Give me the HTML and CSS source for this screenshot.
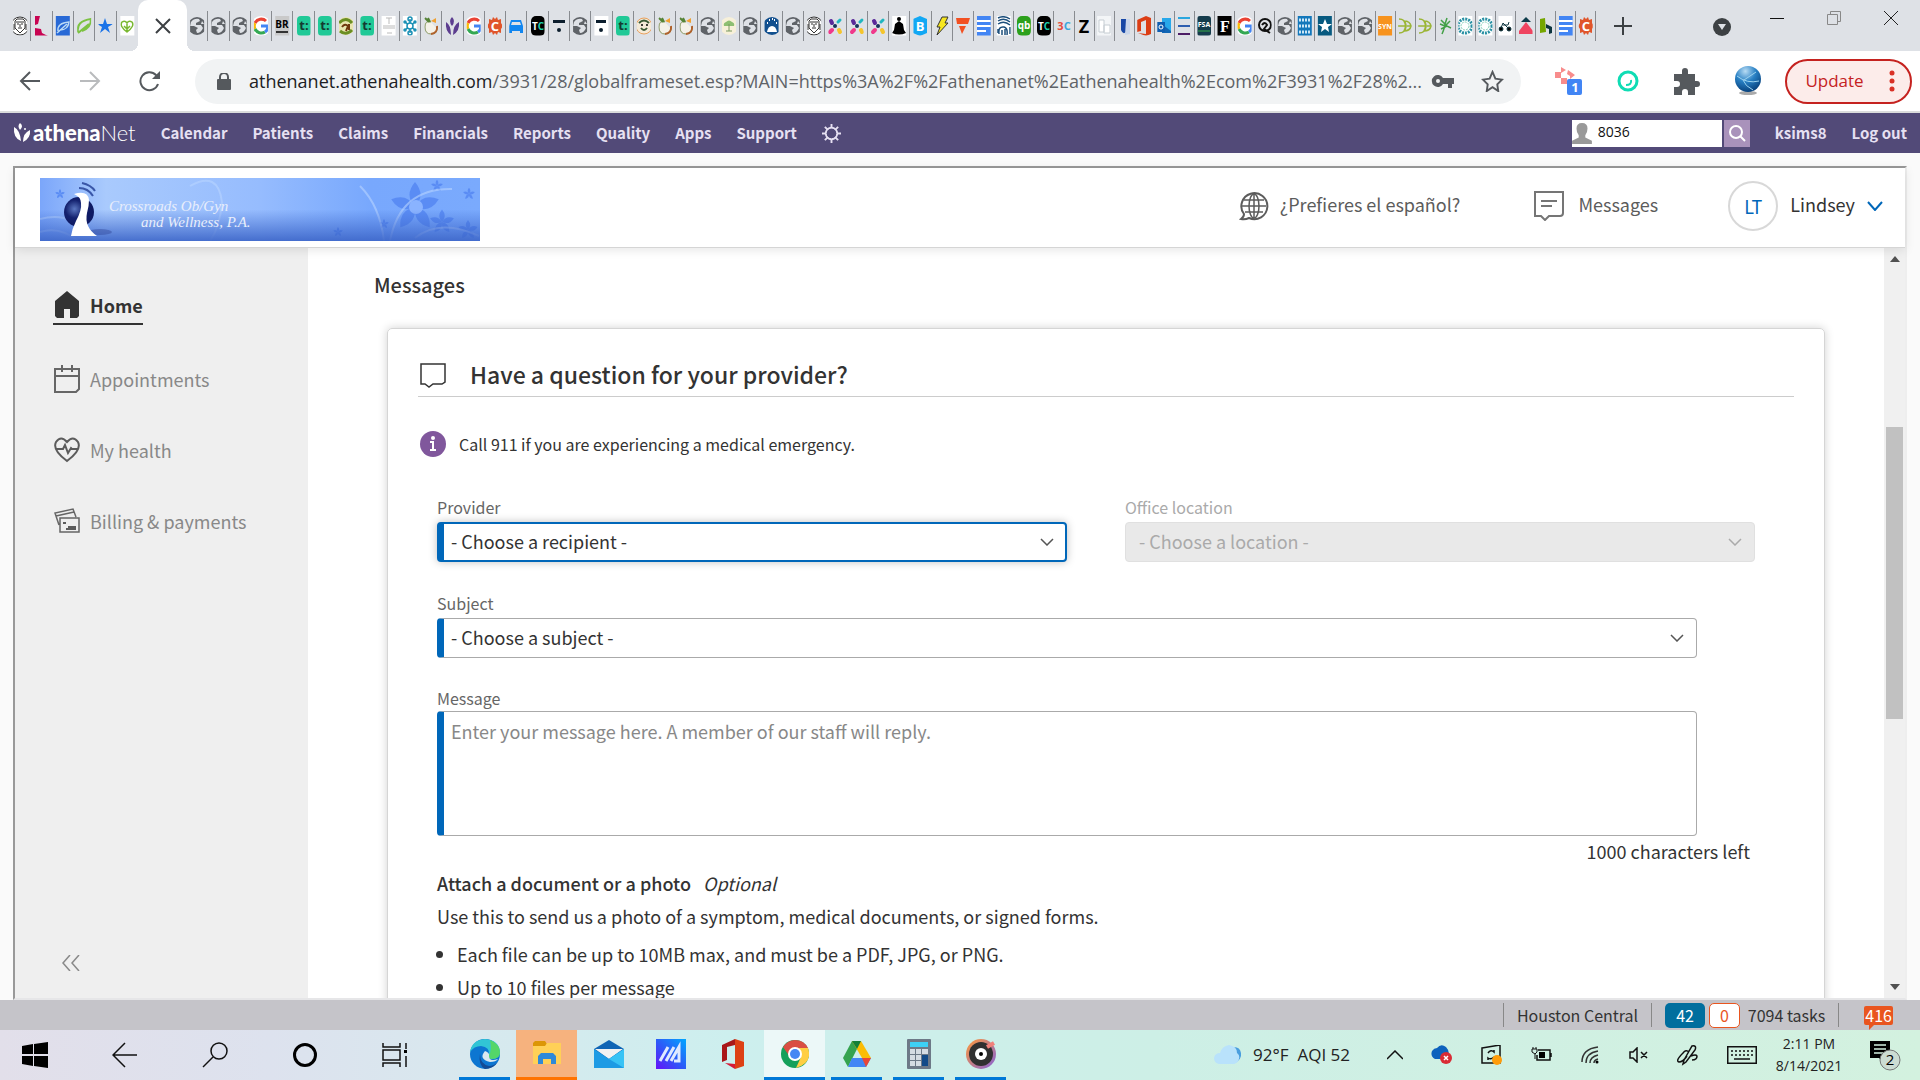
FILE: index.html
```html
<!DOCTYPE html>
<html lang="en">
<head>
  <meta charset="UTF-8">
  <meta name="viewport" content="width=device-width, initial-scale=1.0">
  <title>athenaNet - Messages</title>
  <link rel="stylesheet" href="styles.css">
</head>
<body>
  <!-- favicon shapes used by the tab strip -->
  <svg class="sprite" aria-hidden="true">
    <symbol id="f-globe" viewBox="0 0 20 20"><circle cx="10" cy="10" r="9" fill="#5f6368"/><path d="M4 6q3-4 8-3l1 2-4 2v2l5 0 2 3q-2 5-6 5l-1-3 2-2-4-2-4 0zM15 5l2 3-3 0z" fill="#dee1e6"/></symbol>
    <symbol id="f-seal" viewBox="0 0 20 20"><circle cx="10" cy="10" r="9" fill="#fff" stroke="#333"/><path d="M5 5l2-2h6l2 2v7l-5 5-5-5zM7 8h2m2 0h2m-5 4h4M10 8v3M4 8v6m12-6v6M6 6h8" fill="none" stroke="#333"/></symbol>
    <symbol id="f-k" viewBox="0 0 20 20"><path d="M4 0h5L7 8l-3 1zM4 20v-8l6 1 1 4 6 3z" fill="#c80452"/></symbol>
    <symbol id="f-swirlblue" viewBox="0 0 20 20"><path d="M0 0h20v20H0z" fill="#2869d6"/><path d="M5 15Q4 7 16 6q-1 8-9 8M4 17l10-9" fill="none" stroke="#b9d9f5" stroke-width="1.500"/></symbol>
    <symbol id="f-swirlgreen" viewBox="0 0 20 20"><path d="M4 16Q2 5 17 3q0 9-9 12M4 17l11-9" fill="none" stroke="#7cc242" stroke-width="2"/></symbol>
    <symbol id="f-star" viewBox="0 0 20 20"><path d="M10 2l2 6h6l-5 3 2 6-5-4-5 4 2-6-5-3h6z" fill="#1a73e8"/></symbol>
    <symbol id="f-heart" viewBox="0 0 20 20"><path d="M0 0h20v20H0z" fill="#fff"/><path d="M10 16Q2 10 5 6q3-2 5 1 2-3 5-1 3 4-5 10zm0 0V8m0 5l3-3m-3 3l-3-3" fill="none" stroke="#79b831" stroke-width="1.500"/></symbol>
    <symbol id="f-g" viewBox="0 0 20 20"><circle cx="10" cy="10" r="10" fill="#fff"/><g fill="none" stroke-width="3"><path d="M15 5A7 7 0 0 0 4 7" stroke="#ea4335"/><path d="M4 7a7 7 0 0 0 0 6" stroke="#fbbc05"/><path d="M4 13a7 7 0 0 0 10 3" stroke="#34a853"/><path d="M14 16q3-2 3-6h-7" stroke="#4285f4"/></g></symbol>
    <symbol id="f-br" viewBox="0 0 20 20"><path d="M0 0h20v20H0z" fill="#c9c9c9"/><text x="10" y="12" font-size="10">BR</text><path d="M4 15h12v2H4z" fill="#333"/></symbol>
    <symbol id="f-t" viewBox="0 0 20 20"><rect x="3" width="14" height="20" rx="4" fill="#20c997"/><text x="10" y="14" font-size="13" fill="#143a30">t:</text></symbol>
    <symbol id="f-olive" viewBox="0 0 20 20"><circle cx="10" cy="10" r="9" fill="#e9e6b0"/><path d="M3 7q7-7 13 0M4 15q6 5 12-1" stroke="#6b8e23" stroke-width="3" fill="none"/><path d="M6 11q3-4 6-1l-2 5M13 8v6" stroke="#70380e" stroke-width="2" fill="none"/></symbol>
    <symbol id="f-faint" viewBox="0 0 20 20"><path d="M0 0h20v20H0z" fill="#fff"/><path d="M7 2h6M10 2v6M4 10h12M4 12h12M8 17h5" stroke="#bbb" fill="none"/></symbol>
    <symbol id="f-flake" viewBox="0 0 20 20"><path d="M0 0h20v20H0z" fill="#fff"/><g fill="none" stroke="#188fb5" stroke-width="1.500"><path d="M10 3v14M5 6l10 8M15 6L5 14"/><circle cx="10" cy="10" r="3" fill="#fff"/><circle cx="10" cy="3" r="2"/><circle cx="10" cy="17" r="2"/><circle cx="5" cy="6" r="1"/><circle cx="15" cy="6" r="1"/><circle cx="5" cy="14" r="1"/><circle cx="15" cy="14" r="1"/></g></symbol>
    <symbol id="f-peach" viewBox="0 0 20 20"><path d="M10 6Q4 4 4 11t6 7 6-5" fill="#f4f1e8" stroke="#8a9a65"/><path d="M16 10q1 7-6 8" fill="none" stroke="#b0622c" stroke-width="2"/><path d="M4 2l4 4M7 2l2 4" stroke="#558336" stroke-width="2"/><path d="M10 5l5-3v5z" fill="#f0a030"/></symbol>
    <symbol id="f-athena" viewBox="0 0 20 20"><path d="M10 1q4 4 0 9-4-5 0-9zM4 6q5 3 5 13-6-4-5-13zM17 6q-6 3-6 13 7-4 6-13z" fill="#5c3d8f"/></symbol>
    <symbol id="f-c" viewBox="0 0 20 20"><path d="M8 1l2 2 2-2 1 3 3-1v4l2 3-2 3v4l-3-1-1 3-2-2-2 2-1-3-3 1v-4l-2-3 2-3V3l3 1z" fill="#e0552b"/><text x="10" y="15" font-size="13" class="white">C</text></symbol>
    <symbol id="f-car" viewBox="0 0 20 20"><path d="M5 4h10l2 6v7h-3v-2H6v2H3v-7zM6 6l-1 3h10l-1-3z" fill="#1186f0"/></symbol>
    <symbol id="f-tc" viewBox="0 0 20 20"><rect x="3" width="14" height="20" rx="5"/><text x="10" y="14" font-size="10" class="white">T<tspan fill="#1ed1b0">C</tspan></text></symbol>
    <symbol id="f-dash" viewBox="0 0 20 20"><path d="M4 4h12v3H4z" fill="#0c1e2e"/><circle cx="10" cy="14" r="2" fill="#0c1e2e"/></symbol>
    <symbol id="f-dashwhite" viewBox="0 0 20 20"><path d="M0 0h20v20H0z" fill="#fff"/><path d="M5 4h10v3H5z" fill="#0c1e2e"/><circle cx="10" cy="14" r="2" fill="#0c1e2e"/></symbol>
    <symbol id="f-face" viewBox="0 0 20 20"><circle cx="10" cy="10" r="8" fill="#f4ead8" stroke="#e9a15e"/><path d="M5 7q5-5 10 0M7 12q3 4 6 0" stroke="#3a5a35" stroke-width="2" fill="none"/><circle cx="8" cy="9" r="1"/><circle cx="13" cy="9" r="1"/></symbol>
    <symbol id="f-tree" viewBox="0 0 20 20"><circle cx="10" cy="10" r="9" fill="#f7f0d9"/><path d="M5 10q-1-3 2-4 3-3 6 0 3 1 2 4z" fill="#8ebf73"/><path d="M10 8v7M7 15h6" stroke="#7a9a60"/></symbol>
    <symbol id="f-badge" viewBox="0 0 20 20"><circle cx="10" cy="10" r="9" fill="#12508f"/><path d="M5 16q1-6 5-6t5 6z" fill="#fff"/><path d="M7 4h1m4 0h1M5 7h1m8 0h1m-5-4h1" stroke="#fff" stroke-width="2"/></symbol>
    <symbol id="f-x" viewBox="0 0 20 20"><g stroke-linecap="round"><path d="M6 5l1 2" stroke="#5a2a9a" stroke-width="4"/><path d="M15 4l-2 2" stroke="#21b6c0" stroke-width="3"/><path d="M7 14l-2 2" stroke="#f0398b" stroke-width="4"/><path d="M14 14l1 2" stroke="#f5c52c" stroke-width="4"/></g><circle cx="10" cy="10" r="2" fill="#16325c"/></symbol>
    <symbol id="f-yoga" viewBox="0 0 20 20"><path d="M0 0h20v20H0z" fill="#fff"/><circle cx="10" cy="3" r="2"/><path d="M10 5l4 3 1 6 2 3q-7 3-14 0l2-3 1-6z"/></symbol>
    <symbol id="f-b" viewBox="0 0 20 20"><path d="M10 0l7 3v14l-7 3-7-3V3z" fill="#12a8f4"/><text x="10" y="15" font-size="13" class="white">B</text></symbol>
    <symbol id="f-bolt" viewBox="0 0 20 20"><path d="M10 1h6l-3 6h3L5 19l3-8H5z" fill="#f7e620" stroke="#333"/></symbol>
    <symbol id="f-flag" viewBox="0 0 20 20"><path d="M3 2h14l-2 6H4zM6 10h7l-4 8z" fill="#f25022"/></symbol>
    <symbol id="f-docs" viewBox="0 0 20 20"><path d="M3 0h14v20H3z" fill="#4285f4"/><path d="M3 5h14M3 10h14M3 15h9" stroke="#fff" stroke-width="2"/></symbol>
    <symbol id="f-print" viewBox="0 0 20 20"><path d="M0 0h20v20H0z" fill="#fff"/><path d="M4 2q6-3 12 1M4 5q6-4 12 1M4 8q6-4 12 1M5 18q-1-8 5-7 4 1 3 8M8 19v-5M11 13v6M4 13v4m12-6v7" fill="none" stroke="#1d4f7c" stroke-width="1.500"/></symbol>
    <symbol id="f-qb" viewBox="0 0 20 20"><rect x="3" width="14" height="20" rx="5" fill="#2ca01c"/><text x="10" y="13" font-size="10" class="white">qb</text></symbol>
    <symbol id="f-3c" viewBox="0 0 20 20"><text x="10" y="14" font-size="11" fill="#e64b3c">3<tspan fill="#38a5dd">C</tspan></text></symbol>
    <symbol id="f-z" viewBox="0 0 20 20"><text x="10" y="17" font-size="18">Z</text></symbol>
    <symbol id="f-sheet" viewBox="0 0 20 20"><path d="M3 0h14v20H3z" fill="#f3f5f7"/><path d="M5 4h5v12H5zM10 9h6v8h-6z" fill="#fff" stroke="#c6cdd3"/></symbol>
    <symbol id="f-tie" viewBox="0 0 20 20"><path d="M7 3h5v13q-3 3-5-2z" fill="#1747a6"/><path d="M12 3h4v15l-5 1z" fill="#c8d5ea"/></symbol>
    <symbol id="f-office" viewBox="0 0 20 20"><path d="M12 0l5 2v16l-5 2-8-3 8 1V4L7 6v9l-4 1V4z" fill="#dc3e15"/></symbol>
    <symbol id="f-outlook" viewBox="0 0 20 20"><path d="M8 2h9v15H8z" fill="#28a8ea"/><path d="M9 9l8 6v2H8z" fill="#1066b5"/><path d="M3 6h8v10H3z" fill="#0f5db0"/><circle cx="7" cy="11" r="2" fill="none" stroke="#fff"/></symbol>
    <symbol id="f-lines" viewBox="0 0 20 20"><path d="M4 2h12" stroke="#2aa7df" stroke-width="2"/><path d="M4 10h12" stroke="#2e5fb0" stroke-width="2"/><path d="M4 18h12" stroke="#4d1d66" stroke-width="2"/></symbol>
    <symbol id="f-fsa" viewBox="0 0 20 20"><rect x="3" width="14" height="20" rx="3" fill="#153c4c"/><text x="10" y="11" font-size="7" class="white">FSA</text><path d="M4 15h12" stroke="#35a649"/></symbol>
    <symbol id="f-f" viewBox="0 0 20 20"><path d="M0 0h20v20H0z"/><text x="10" y="16" font-size="16" class="white serif">F</text></symbol>
    <symbol id="f-q" viewBox="0 0 20 20"><circle cx="10" cy="9" r="6" fill="none" stroke="#111" stroke-width="2"/><path d="M7 9q3-4 5 0l-3 4 6 4" fill="none" stroke="#111" stroke-width="2"/></symbol>
    <symbol id="f-dean" viewBox="0 0 20 20"><path d="M0 0h20v20H0z" fill="#1277bb"/><path d="M4 4h12M4 10h12M4 16h12" stroke="#cbe6f6" stroke-width="3" stroke-dasharray="2 1"/></symbol>
    <symbol id="f-starteal" viewBox="0 0 20 20"><path d="M0 0h20v20H0z" fill="#075a80"/><path d="M10 3l2 5h5l-4 3 1 5-4-3-4 3 1-5-4-3h5z" fill="#fff"/></symbol>
    <symbol id="f-syn" viewBox="0 0 20 20"><path d="M0 0h20v20H0z" fill="#f7931e"/><text x="10" y="13" font-size="7" class="white">SYN</text></symbol>
    <symbol id="f-leafarrow" viewBox="0 0 20 20"><path d="M4 3q6 0 7 6M4 17q6 0 7-6M3 10h12M9 5q6 0 7 5-1 5-7 5 3-5 0-10z" fill="none" stroke="#9bb536" stroke-width="1.500"/></symbol>
    <symbol id="f-plant" viewBox="0 0 20 20"><path d="M7 18q3-7 3-10M5 8l5 2 5-5M6 4l4 4 2-6M6 13l6-3 4 2" fill="none" stroke="#43a047" stroke-width="1.500"/></symbol>
    <symbol id="f-rings" viewBox="0 0 20 20"><path d="M0 0h20v20H0z" fill="#fff"/><circle cx="10" cy="10" r="7" fill="none" stroke="#2a91a4" stroke-width="3" stroke-dasharray="2 1"/><circle cx="10" cy="10" r="4" fill="none" stroke="#82ccb5" stroke-dasharray="2 1"/></symbol>
    <symbol id="f-bike" viewBox="0 0 20 20"><path d="M0 0h20v20H0z" fill="#fff"/><path d="M6 12l2-5 5 5M8 9h5l1-3" fill="none" stroke="#0e3640"/><circle cx="6" cy="13" r="2" stroke="#0e3640"/><circle cx="14" cy="13" r="2" stroke="#0e3640"/></symbol>
    <symbol id="f-house" viewBox="0 0 20 20"><path d="M10 1l5 5H5z" fill="#0e3d4b"/><path d="M10 6l7 9v3H3v-3z" fill="#ef4460"/></symbol>
    <symbol id="f-n" viewBox="0 0 20 20"><path d="M4 3l5-1 1 14-6 1z" fill="#75a600"/><path d="M10 8l6 3v6l-3 1v-5l-3-1z" fill="#0d353f"/></symbol>
  </svg>

  <header class="browser">
    <div class="tab-strip">
      <div class="tabs tabs-first">
        <a href="#" class="tab" aria-label="Tab"><svg><use href="#f-seal"/></svg></a>
        <a href="#" class="tab" aria-label="Tab"><svg><use href="#f-k"/></svg></a>
        <a href="#" class="tab" aria-label="Tab"><svg><use href="#f-swirlblue"/></svg></a>
        <a href="#" class="tab" aria-label="Tab"><svg><use href="#f-swirlgreen"/></svg></a>
        <a href="#" class="tab" aria-label="Tab"><svg><use href="#f-star"/></svg></a>
        <a href="#" class="tab" aria-label="Tab"><svg><use href="#f-heart"/></svg></a>
      </div>
      <button type="button" class="tab-active" aria-label="Close tab">
        <svg width="16" height="16" viewBox="0 0 16 16"><path d="M1 1l14 14M15 1L1 15" stroke="#3c4043" stroke-width="2"/></svg>
      </button>
      <div class="tabs tabs-middle">
        <a href="#" class="tab" aria-label="Tab"><svg><use href="#f-globe"/></svg></a>
        <a href="#" class="tab" aria-label="Tab"><svg><use href="#f-globe"/></svg></a>
        <a href="#" class="tab" aria-label="Tab"><svg><use href="#f-globe"/></svg></a>
        <a href="#" class="tab" aria-label="Tab"><svg><use href="#f-g"/></svg></a>
        <a href="#" class="tab" aria-label="Tab"><svg><use href="#f-br"/></svg></a>
        <a href="#" class="tab" aria-label="Tab"><svg><use href="#f-t"/></svg></a>
        <a href="#" class="tab" aria-label="Tab"><svg><use href="#f-t"/></svg></a>
        <a href="#" class="tab" aria-label="Tab"><svg><use href="#f-olive"/></svg></a>
        <a href="#" class="tab" aria-label="Tab"><svg><use href="#f-t"/></svg></a>
        <a href="#" class="tab" aria-label="Tab"><svg><use href="#f-faint"/></svg></a>
        <a href="#" class="tab" aria-label="Tab"><svg><use href="#f-flake"/></svg></a>
        <a href="#" class="tab" aria-label="Tab"><svg><use href="#f-peach"/></svg></a>
        <a href="#" class="tab" aria-label="Tab"><svg><use href="#f-athena"/></svg></a>
        <a href="#" class="tab" aria-label="Tab"><svg><use href="#f-g"/></svg></a>
        <a href="#" class="tab" aria-label="Tab"><svg><use href="#f-c"/></svg></a>
        <a href="#" class="tab" aria-label="Tab"><svg><use href="#f-car"/></svg></a>
        <a href="#" class="tab" aria-label="Tab"><svg><use href="#f-tc"/></svg></a>
        <a href="#" class="tab" aria-label="Tab"><svg><use href="#f-dash"/></svg></a>
        <a href="#" class="tab" aria-label="Tab"><svg><use href="#f-globe"/></svg></a>
        <a href="#" class="tab" aria-label="Tab"><svg><use href="#f-dashwhite"/></svg></a>
        <a href="#" class="tab" aria-label="Tab"><svg><use href="#f-t"/></svg></a>
        <a href="#" class="tab" aria-label="Tab"><svg><use href="#f-face"/></svg></a>
        <a href="#" class="tab" aria-label="Tab"><svg><use href="#f-peach"/></svg></a>
        <a href="#" class="tab" aria-label="Tab"><svg><use href="#f-peach"/></svg></a>
        <a href="#" class="tab" aria-label="Tab"><svg><use href="#f-globe"/></svg></a>
        <a href="#" class="tab" aria-label="Tab"><svg><use href="#f-tree"/></svg></a>
        <a href="#" class="tab" aria-label="Tab"><svg><use href="#f-globe"/></svg></a>
        <a href="#" class="tab" aria-label="Tab"><svg><use href="#f-badge"/></svg></a>
        <a href="#" class="tab" aria-label="Tab"><svg><use href="#f-globe"/></svg></a>
        <a href="#" class="tab" aria-label="Tab"><svg><use href="#f-seal"/></svg></a>
        <a href="#" class="tab" aria-label="Tab"><svg><use href="#f-x"/></svg></a>
        <a href="#" class="tab" aria-label="Tab"><svg><use href="#f-x"/></svg></a>
        <a href="#" class="tab" aria-label="Tab"><svg><use href="#f-x"/></svg></a>
        <a href="#" class="tab" aria-label="Tab"><svg><use href="#f-yoga"/></svg></a>
        <a href="#" class="tab" aria-label="Tab"><svg><use href="#f-b"/></svg></a>
        <a href="#" class="tab" aria-label="Tab"><svg><use href="#f-bolt"/></svg></a>
        <a href="#" class="tab" aria-label="Tab"><svg><use href="#f-flag"/></svg></a>
      </div>
      <div class="tabs tabs-last">
        <a href="#" class="tab" aria-label="Tab"><svg><use href="#f-docs"/></svg></a>
        <a href="#" class="tab" aria-label="Tab"><svg><use href="#f-print"/></svg></a>
        <a href="#" class="tab" aria-label="Tab"><svg><use href="#f-qb"/></svg></a>
        <a href="#" class="tab" aria-label="Tab"><svg><use href="#f-tc"/></svg></a>
        <a href="#" class="tab" aria-label="Tab"><svg><use href="#f-3c"/></svg></a>
        <a href="#" class="tab" aria-label="Tab"><svg><use href="#f-z"/></svg></a>
        <a href="#" class="tab" aria-label="Tab"><svg><use href="#f-sheet"/></svg></a>
        <a href="#" class="tab" aria-label="Tab"><svg><use href="#f-tie"/></svg></a>
        <a href="#" class="tab" aria-label="Tab"><svg><use href="#f-office"/></svg></a>
        <a href="#" class="tab" aria-label="Tab"><svg><use href="#f-outlook"/></svg></a>
        <a href="#" class="tab" aria-label="Tab"><svg><use href="#f-lines"/></svg></a>
        <a href="#" class="tab" aria-label="Tab"><svg><use href="#f-fsa"/></svg></a>
        <a href="#" class="tab" aria-label="Tab"><svg><use href="#f-f"/></svg></a>
        <a href="#" class="tab" aria-label="Tab"><svg><use href="#f-g"/></svg></a>
        <a href="#" class="tab" aria-label="Tab"><svg><use href="#f-q"/></svg></a>
        <a href="#" class="tab" aria-label="Tab"><svg><use href="#f-globe"/></svg></a>
        <a href="#" class="tab" aria-label="Tab"><svg><use href="#f-dean"/></svg></a>
        <a href="#" class="tab" aria-label="Tab"><svg><use href="#f-starteal"/></svg></a>
        <a href="#" class="tab" aria-label="Tab"><svg><use href="#f-globe"/></svg></a>
        <a href="#" class="tab" aria-label="Tab"><svg><use href="#f-globe"/></svg></a>
        <a href="#" class="tab" aria-label="Tab"><svg><use href="#f-syn"/></svg></a>
        <a href="#" class="tab" aria-label="Tab"><svg><use href="#f-leafarrow"/></svg></a>
        <a href="#" class="tab" aria-label="Tab"><svg><use href="#f-leafarrow"/></svg></a>
        <a href="#" class="tab" aria-label="Tab"><svg><use href="#f-plant"/></svg></a>
        <a href="#" class="tab" aria-label="Tab"><svg><use href="#f-rings"/></svg></a>
        <a href="#" class="tab" aria-label="Tab"><svg><use href="#f-rings"/></svg></a>
        <a href="#" class="tab" aria-label="Tab"><svg><use href="#f-bike"/></svg></a>
        <a href="#" class="tab" aria-label="Tab"><svg><use href="#f-house"/></svg></a>
        <a href="#" class="tab" aria-label="Tab"><svg><use href="#f-n"/></svg></a>
        <a href="#" class="tab" aria-label="Tab"><svg><use href="#f-docs"/></svg></a>
        <a href="#" class="tab" aria-label="Tab"><svg><use href="#f-c"/></svg></a>
      </div>
      <button type="button" class="new-tab" aria-label="New tab"><svg width="18" height="18" viewBox="0 0 18 18"><path d="M9 0v18M0 9h18" stroke="#3c4043" stroke-width="2"/></svg></button>
      <div class="window-buttons">
        <button type="button" class="tab-search" aria-label="Search tabs"><svg width="18" height="18" viewBox="0 0 18 18"><circle cx="9" cy="9" r="9" fill="#3c4043"/><path d="M5 6h8l-4 6z" fill="#dee1e6"/></svg></button>
        <button type="button" aria-label="Minimize"><svg width="14" height="14" viewBox="0 0 14 14"><path d="M0 7.500h14" stroke="#111"/></svg></button>
        <button type="button" aria-label="Restore"><svg width="14" height="14" viewBox="0 0 14 14"><path d="M.5 3.500h10v10H.5zM3.500 3V.5h10v10H11" fill="none" stroke="#888"/></svg></button>
        <button type="button" aria-label="Close"><svg width="14" height="14" viewBox="0 0 14 14"><path d="M0 0l14 14M14 0L0 14" stroke="#222"/></svg></button>
      </div>
    </div>

    <div class="toolbar">
      <div class="toolbar-nav">
        <button type="button" aria-label="Back"><svg width="22" height="22" viewBox="0 0 22 22"><path d="M21 11H2m9-9l-9 9 9 9" fill="none" stroke="#55595d" stroke-width="2"/></svg></button>
        <button type="button" aria-label="Forward"><svg width="22" height="22" viewBox="0 0 22 22"><path d="M1 11h19m-9-9l9 9-9 9" fill="none" stroke="#b9bbbd" stroke-width="2"/></svg></button>
        <button type="button" aria-label="Reload"><svg width="22" height="22" viewBox="0 0 22 22"><path d="M19 14a9 9 0 1 1-2-9l2 2" fill="none" stroke="#55595d" stroke-width="2"/><path d="M21 1v8h-8z" fill="#55595d"/></svg></button>
      </div>
      <div class="address">
        <svg width="14" height="17" viewBox="0 0 14 17"><path d="M3 7V4a4 4 0 0 1 8 0v3" fill="none" stroke="#55595d" stroke-width="2"/><rect y="6" width="14" height="11" rx="1" fill="#55595d"/></svg>
        <div class="url" role="textbox" aria-label="Address"><span>athenanet.athenahealth.com</span>/3931/28/globalframeset.esp?MAIN=https%3A%2F%2Fathenanet%2Eathenahealth%2Ecom%2F3931%2F28%2...</div>
        <svg width="23" height="14" viewBox="0 0 23 14"><path d="M12 4a6 6 0 1 0 0 6h5v4h4v-4h2V4zM7 5a2 2 0 1 1 0 4 2 2 0 0 1 0-4z" fill="#55595d"/></svg>
        <svg width="23" height="22" viewBox="0 0 24 23"><path d="M12 2l3 7 7 1-5 5 1 7-6-4-6 4 1-7-5-5 7-1z" fill="none" stroke="#55595d" stroke-width="2"/></svg>
      </div>
      <div class="extensions">
        <svg width="28" height="28" viewBox="0 0 28 28"><path d="M0 5h6v6H0zm6 6h6v6H6zM6 0l5 3-5 3zM13 3l7 5-5 4v-3l-3-2z" fill="#f88c8c"/><rect x="12" y="12" width="15" height="16" rx="2" fill="#4285f4"/><text x="20" y="25" font-size="13" class="white">1</text></svg>
        <svg width="22" height="22" viewBox="0 0 22 22"><circle cx="11" cy="11" r="9" fill="none" stroke="#0fdcb4" stroke-width="3"/><path d="M14 10q1 5-5 5" fill="none" stroke="#0fdcb4" stroke-width="2"/></svg>
        <svg width="27" height="27" viewBox="0 0 27 27"><path d="M1 6h8V3a3 3 0 0 1 6 0v3h7v7h2a3 3 0 0 1 0 6h-2v8h-7v-3a3 3 0 0 0-6 0v3H1v-8h3a3 3 0 0 0 0-6H1z" fill="#55595d"/></svg>
        <svg width="28" height="30" viewBox="0 0 28 30"><defs><radialGradient id="ball" cx=".4" cy=".2" r=".8"><stop offset="0" stop-color="#b8dcf4"/><stop offset=".5" stop-color="#2880c4"/><stop offset="1" stop-color="#08427d"/></radialGradient></defs><ellipse cx="14" cy="27" rx="9" ry="2" fill="#aaa"/><circle cx="14" cy="13" r="13" fill="url(#ball)"/><path d="M3 10q10 8 22 5M9 14q2 6 10 10M10 14l12-8" fill="none" stroke="#9cd3ef"/></svg>
      </div>
      <button type="button" class="update">Update
        <svg width="6" height="22" viewBox="0 0 6 22"><circle cx="3" cy="3" r="2.500"/><circle cx="3" cy="11" r="2.500"/><circle cx="3" cy="19" r="2.500"/></svg>
      </button>
    </div>
  </header>

  <nav class="athena-nav">
    <a href="#" class="athena-logo">
      <svg width="18" height="20" viewBox="0 0 18 20"><path d="M7 0q4 3 0 7-3-4 0-7zM1 4q6 3 7 14-8-3-7-14zM17 7q1 8-7 12 0-9 7-12z" fill="#fff"/><circle cx="12" cy="6" r="1" fill="#fff"/></svg>
      <span><b>athena</b>Net</span>
    </a>
    <a href="#">Calendar</a>
    <a href="#">Patients</a>
    <a href="#">Claims</a>
    <a href="#">Financials</a>
    <a href="#">Reports</a>
    <a href="#">Quality</a>
    <a href="#">Apps</a>
    <a href="#">Support</a>
    <a href="#" class="gear" aria-label="Settings"><svg width="19" height="19" viewBox="0 0 20 20"><circle cx="10" cy="10" r="6" fill="none" stroke="#e6e0f2" stroke-width="2"/><path d="M10 4V0m0 16v4M4 10H0m16 0h4M6 6L3 3m11 3l3-3M6 14l-3 3m11-3l3 3" stroke="#e6e0f2" stroke-width="2"/><circle cx="10" cy="10" r="5" fill="#524a78"/></svg></a>
    <form class="patient-search">
      <svg width="20" height="22" viewBox="0 0 18 20"><path d="M9 1q5 0 5 5 0 4-2 6v2l6 3v3H0v-3l6-3v-2q-2-2-2-6 0-5 5-5z" fill="#999"/></svg>
      <input type="text" value="8036" aria-label="Patient search">
      <button type="submit" aria-label="Search"><svg width="18" height="18" viewBox="0 0 18 18"><circle cx="8" cy="8" r="6" fill="none" stroke="#fff" stroke-width="2"/><path d="M12 12l5 5" stroke="#fff" stroke-width="2"/></svg></button>
    </form>
    <a href="#">ksims8</a>
    <a href="#">Log out</a>
  </nav>

  <div class="frame">
    <header class="portal-header">
      <a href="#" class="practice-logo" aria-label="Crossroads Ob/Gyn and Wellness">
        <svg viewBox="0 0 440 63">
          <defs>
            <linearGradient id="sky"><stop offset="0" stop-color="#7ba6fa"/><stop offset=".15" stop-color="#a9cafd"/><stop offset=".5" stop-color="#96bcfe"/><stop offset=".75" stop-color="#78a8fd"/><stop offset="1" stop-color="#7aaafd"/></linearGradient>
            <linearGradient id="dusk" x2="0" y2="1"><stop offset=".5" stop-color="#3d68cd" stop-opacity="0"/><stop offset="1" stop-color="#3c65c8" stop-opacity=".9"/></linearGradient>
            <radialGradient id="orb" cx=".35" cy=".4"><stop offset="0" stop-color="#5a76c0"/><stop offset=".6" stop-color="#14226f"/><stop offset="1" stop-color="#0e1a63"/></radialGradient>
            <path id="petal" d="M0 0Q-11-12 0-25 11-12 0 0z"/>
            <g id="flower"><use href="#petal"/><use href="#petal" transform="rotate(72)"/><use href="#petal" transform="rotate(144)"/><use href="#petal" transform="rotate(216)"/><use href="#petal" transform="rotate(288)"/></g>
          </defs>
          <path d="M0 0h440v63H0z" fill="url(#sky)"/>
          <g fill="#5a8cf4">
            <use href="#flower" transform="translate(375 29)"/>
            <use href="#flower" transform="translate(402 44) scale(.5)"/>
            <use href="#flower" transform="translate(428 52) scale(.4)"/>
            <use href="#flower" transform="translate(429 16) scale(.25)"/>
            <use href="#flower" transform="translate(397 8) scale(.25)"/>
            <use href="#flower" transform="translate(344 46) scale(.2)"/>
            <use href="#flower" transform="translate(298 54) scale(.2)"/>
            <use href="#flower" transform="translate(20 16) scale(.2)"/>
          </g>
          <g fill="none" stroke="#b8d3ff" stroke-opacity=".6" stroke-width="2"><path d="M320 8q20 20 24 55M350 63q10-53 62-52M375 60q25-20 64-2M0 41q30-8 44 15M0 54q20-6 38 9M150 8q28-16 32 16-2 25-12 39"/></g>
          <circle cx="376" cy="29" r="7" fill="#8ab3ff"/>
          <path d="M0 0h440v63H0z" fill="url(#dusk)"/>
          <ellipse cx="60" cy="54" rx="12" ry="3" fill="#2a3f90" opacity=".4"/>
          <circle cx="39" cy="34" r="15" fill="url(#orb)"/>
          <path d="M34 16q14-4 15 6 0 6-2 13-3 14 10 23H31q1-7 5-15 6-11 5-18 0-6-7-9z" fill="#fff"/>
          <path d="M42 5q9 2 13 8M39 10q9 0 14 8" fill="none" stroke="#3956a8" stroke-width="2"/>
          <text x="69" y="33" class="logo-text">Crossroads Ob/Gyn</text>
          <text x="101" y="49" class="logo-text">and Wellness, P.A.</text>
        </svg>
      </a>
      <a href="#" class="header-link">
        <svg width="30" height="30" viewBox="0 0 30 30"><g fill="none" stroke="#5c5c5c" stroke-width="2"><path d="M5 23a13 13 0 1 1 5 4q-4 2-8 1 3-2 3-5z"/><ellipse cx="15" cy="15" rx="5" ry="12" stroke-width="1.500"/><path d="M15 3v24M5 9h20M3 15h24M6 21h18" stroke-width="1.500"/></g></svg>
        <span>¿Prefieres el español?</span>
      </a>
      <a href="#" class="header-link messages-link">
        <svg width="30" height="30" viewBox="0 0 30 30"><g fill="none" stroke="#757575" stroke-width="2"><path d="M1 1h28v21q0 3-3 3H15l-4 4-4-4H1z"/><path d="M7 10h16M7 15h11"/></g></svg>
        <span>Messages</span>
      </a>
      <button type="button" class="user-menu">
        <span class="avatar">LT</span>
        <span class="user-name">Lindsey</span>
        <svg width="16" height="10" viewBox="0 0 16 10"><path d="M1 1l7 8 7-8" fill="none" stroke="#0067b9" stroke-width="2"/></svg>
      </button>
    </header>

    <div class="portal-body">
      <aside class="sidebar">
        <nav>
          <a href="#" class="side-link active"><svg width="26" height="28" viewBox="0 0 26 28"><path d="M1 10L13 0l12 10v15l-2 2h-7v-9h-6v9H3l-2-2z" fill="#333"/></svg><span>Home</span></a>
          <a href="#" class="side-link"><svg width="26" height="28" viewBox="0 0 26 28"><path d="M1 4h24v20l-3 3H1zM1 11h24M8 0v7M18 0v7" fill="none" stroke="#666" stroke-width="2"/></svg><span>Appointments</span></a>
          <a href="#" class="side-link"><svg width="26" height="28" viewBox="0 0 26 28"><path d="M13 25Q-2 14 2 6q5-7 11 0 6-7 11 0 4 8-11 19zM2 13h7l2-4 3 8 3-5 1 1h6" fill="none" stroke="#5c5c5c" stroke-width="2"/></svg><span>My health</span></a>
          <a href="#" class="side-link"><svg width="26" height="28" viewBox="0 0 26 28"><path d="M6 11h19v14H6zM5 18L1 6l18-4 3 8M2 9l18-4" fill="none" stroke="#666" stroke-width="1.500"/><path d="M9 16h3M14 20h8M12 22h10" stroke="#5c5c5c" stroke-width="2"/></svg><span>Billing &amp; payments</span></a>
        </nav>
        <button type="button" class="collapse" aria-label="Collapse"><svg width="18" height="16" viewBox="0 0 18 16"><path d="M8 0L1 8l7 8M17 0l-7 8 7 8" fill="none" stroke="#888" stroke-width="1.500"/></svg></button>
      </aside>

      <main class="content">
        <h1>Messages</h1>
        <section class="card">
          <div class="card-title">
            <svg width="26" height="26" viewBox="0 0 26 26"><path d="M1 2h24v18l-3 2H13l-4 3-4-3H1z" fill="none" stroke="#333" stroke-width="1.500"/></svg>
            <h2>Have a question for your provider?</h2>
          </div>
          <p class="notice">
            <svg width="26" height="26" viewBox="0 0 26 26"><circle cx="13" cy="13" r="13" fill="#80579c"/><circle cx="13" cy="7" r="2" fill="#fff"/><path d="M10 10h4v8h2v2h-6v-2h2v-6h-2z" fill="#fff"/></svg>
            Call 911 if you are experiencing a medical emergency.
          </p>

          <form class="message-form">
            <div class="row">
              <div class="field">
                <label for="provider">Provider</label>
                <div class="select required focused">
                  <select id="provider"><option>- Choose a recipient -</option></select>
                  <svg width="14" height="8" viewBox="0 0 14 8"><path d="M1 1l6 6 6-6" fill="none" stroke="#555" stroke-width="1.500"/></svg>
                </div>
              </div>
              <div class="field disabled">
                <label for="location">Office location</label>
                <div class="select">
                  <select id="location" disabled><option>- Choose a location -</option></select>
                  <svg width="14" height="8" viewBox="0 0 14 8"><path d="M1 1l6 6 6-6" fill="none" stroke="#aaa" stroke-width="1.500"/></svg>
                </div>
              </div>
            </div>
            <div class="field wide">
              <label for="subject">Subject</label>
              <div class="select required">
                <select id="subject"><option>- Choose a subject -</option></select>
                <svg width="14" height="8" viewBox="0 0 14 8"><path d="M1 1l6 6 6-6" fill="none" stroke="#555" stroke-width="1.500"/></svg>
              </div>
            </div>
            <div class="field wide message">
              <label for="message">Message</label>
              <textarea id="message" placeholder="Enter your message here. A member of our staff will reply."></textarea>
            </div>
            <p class="counter">1000 characters left</p>
            <p class="attach-title"><strong>Attach a document or a photo</strong> <em>Optional</em></p>
            <p class="attach-text">Use this to send us a photo of a symptom, medical documents, or signed forms.</p>
            <ul>
              <li>Each file can be up to 10MB max, and must be a PDF, JPG, or PNG.</li>
              <li>Up to 10 files per message</li>
            </ul>
          </form>
        </section>
      </main>

      <div class="scrollbar">
        <svg width="10" height="6" viewBox="0 0 10 6"><path d="M0 6l5-6 5 6z" fill="#505050"/></svg>
        <div class="track"><div class="thumb"></div></div>
        <svg width="10" height="6" viewBox="0 0 10 6"><path d="M0 0l5 6 5-6z" fill="#505050"/></svg>
      </div>
    </div>
  </div>

  <footer class="status-bar">
    <span class="status-item">Houston Central</span>
    <span class="status-item tasks"><b class="pill blue">42</b><b class="pill orange">0</b>7094 tasks</span>
    <span class="status-item"><span class="alert-count">416</span></span>
  </footer>

  <footer class="taskbar">
    <div class="system-buttons">
      <button type="button" aria-label="Start"><svg width="26" height="26" viewBox="0 0 26 26"><path d="M0 4l11-2v10H0zM12 2l14-2v12H12zM0 14h11v10L0 22zM12 14h14v12l-14-2z"/></svg></button>
      <button type="button" aria-label="Back"><svg width="26" height="26" viewBox="0 0 26 26"><path d="M25 13H1M13 1L1 13l12 12" fill="none" stroke="#111" stroke-width="1.500"/></svg></button>
      <button type="button" aria-label="Search"><svg width="26" height="26" viewBox="0 0 26 26"><circle cx="17" cy="9" r="8" fill="none" stroke="#111" stroke-width="1.500"/><path d="M11 15L1 25" stroke="#111" stroke-width="1.500"/></svg></button>
      <button type="button" aria-label="Cortana"><svg width="26" height="26" viewBox="0 0 26 26"><circle cx="13" cy="13" r="10.500" fill="none" stroke="#000" stroke-width="3"/></svg></button>
      <button type="button" aria-label="Task view"><svg width="26" height="26" viewBox="0 0 26 26"><path d="M1 1v4h17V1M1 8h17v10H1zM1 25v-4h17v4M24 1v6m0 7v11" fill="none" stroke="#111" stroke-width="1.500"/><path d="M22 8h3v3h-3z"/></svg></button>
    </div>
    <div class="apps">
      <button type="button" class="app open" aria-label="Edge"><svg width="30" height="30" viewBox="0 0 30 30"><circle cx="15" cy="15" r="15" fill="#0d76d1"/><path d="M0 13Q2 1 15 0q14 1 15 13 0 7-8 7-5-1-3-4 1-8-8-9-7 0-11 6z" fill="#31c5d5"/><path d="M20 1q10 4 10 12 0 7-8 7-5-1-3-4 3-4 1-15z" fill="#54d669"/><path d="M10 15q0 10 9 12 5 0 9-4-5 7-13 7Q8 26 10 15z" fill="#134b94"/><path d="M15 12q-7 8 5 11 6 0 8-3-9 3-9-3 1-3-4-5z" fill="#dbe9f0"/></svg></button>
      <button type="button" class="app explorer" aria-label="File Explorer"><svg width="28" height="26" viewBox="0 0 28 26"><path d="M0 2l2-2h10l2 3h14v20H0z" fill="#dc9606"/><path d="M0 5h12l2-3h14v21H0z" fill="#ffd057"/><path d="M5 23v-8l3-3h12l3 3v8h-5v-5h-8v5z" fill="#2f89d8"/></svg></button>
      <button type="button" class="app" aria-label="Mail"><svg width="30" height="28" viewBox="0 0 30 28"><path d="M15 0l15 9v19H0V9z" fill="#1065b5"/><path d="M1 9h28L15 19z" fill="#f2f2f2"/><path d="M0 9l15 10L30 9v19H0z" fill="#1d9be4"/><path d="M15 19L30 9v19z" fill="#38c3f5"/></svg></button>
      <button type="button" class="app" aria-label="MyASUS"><svg width="30" height="30" viewBox="0 0 30 30"><defs><linearGradient id="asus" x1="0" y1="1" x2="1" y2="0"><stop offset="0" stop-color="#6511f8"/><stop offset=".5" stop-color="#2b5df8"/><stop offset="1" stop-color="#00a8ff"/></linearGradient></defs><path d="M0 0h30v30H0z" fill="url(#asus)"/><path d="M4 22L12 8M10 22l8-14M15 22l8-14v14h-5" fill="none" stroke="#dfe9ff" stroke-width="3"/></svg></button>
      <button type="button" class="app" aria-label="Office"><svg width="24" height="30" viewBox="0 0 24 30"><path d="M14 0l9 3v24l-9 3z" fill="#dd4014"/><path d="M14 0L1 6v17l5-2V8l8-2z" fill="#a91618"/><path d="M4 24l10 1v5z" fill="#d51b38"/></svg></button>
      <button type="button" class="app open current" aria-label="Chrome"><svg width="28" height="28" viewBox="0 0 28 28"><circle cx="14" cy="14" r="14" fill="#14a05b"/><path d="M2 7q5-7 12-7 9 0 13 8H14L9 17z" fill="#d94f43"/><path d="M27 8q5 15-12 20l5-11-2-9z" fill="#ffce42"/><circle cx="14" cy="14" r="7" fill="#fff"/><circle cx="14" cy="14" r="5" fill="#4587f4"/></svg></button>
      <button type="button" class="app open" aria-label="Drive"><svg width="28" height="26" viewBox="0 0 28 26"><path d="M9 0h9L5 26 0 17z" fill="#34a34f"/><path d="M9 0h9l10 17h-9z" fill="#fbbc05"/><path d="M9 0h9l-4 8z" fill="#138038"/><path d="M9 17h19l-5 9H5z" fill="#4286f5"/><path d="M19 17h9l-5 9z" fill="#ea4637"/></svg></button>
      <button type="button" class="app open" aria-label="Calculator"><svg width="24" height="30" viewBox="0 0 24 30"><rect width="24" height="30" rx="1" fill="#6d7987"/><path d="M3 3h18v5H3z" fill="#3dd0f5"/><path d="M3 10h5v5H3zm6 0h5v5H9zm6 0h6v5h-6zM3 16h5v5H3zm6 0h5v5H9zM3 22h5v5H3zm6 0h5v5H9z" fill="#d5dce3"/><path d="M15 16h6v11h-6z" fill="#124a88"/></svg></button>
      <button type="button" class="app open" aria-label="Groove"><svg width="30" height="30" viewBox="0 0 30 30"><defs><linearGradient id="groove" x2="1" y2="1"><stop offset="0" stop-color="#ff9838"/><stop offset="1" stop-color="#8562d8"/></linearGradient></defs><circle cx="15" cy="15" r="15" fill="url(#groove)"/><circle cx="15" cy="15" r="12" fill="#303030"/><circle cx="15" cy="15" r="6" fill="#fff"/><circle cx="15" cy="15" r="2"/><path d="M21 8l7-4" stroke="#f0807a" stroke-width="4"/></svg></button>
    </div>
    <div class="tray">
      <button type="button" class="weather"><svg width="28" height="20" viewBox="0 0 28 20"><path d="M18 2q8-1 9 6 1 6-6 10H10z" fill="#4a9ede"/><path d="M5 19q-5-1-5-6 1-5 6-5 2-7 9-8 8 1 8 8 3 2 2 6-1 4-5 5z" fill="#b9e2fb"/></svg><span>92°F&nbsp; AQI 52</span></button>
      <div class="tray-icons">
        <svg width="16" height="10" viewBox="0 0 16 10"><path d="M0 9l8-8 8 8" fill="none" stroke="#111" stroke-width="1.500"/></svg>
        <svg width="22" height="20" viewBox="0 0 22 20"><path d="M4 14q-5-3-3-8 2-3 5-3 4-5 9-1 3 3 3 7l-6 5z" fill="#0d62bd"/><circle cx="15" cy="13" r="6" fill="#d92c35"/><path d="M13 11l4 4m0-4l-4 4" stroke="#fff" stroke-width="1.500"/></svg>
        <svg width="22" height="20" viewBox="0 0 22 20"><path d="M1 3l18-3v18H1z" fill="none" stroke="#111" stroke-width="1.500"/><path d="M7 8q3-4 6-1V5m0 7q-3 3-6 1v2" fill="none" stroke="#111" stroke-width="1.500"/><circle cx="16" cy="15" r="5" fill="#ff9c0a"/></svg>
        <svg width="22" height="18" viewBox="0 0 22 18"><path d="M7 4h12v10H6V9M20 7v4" fill="none" stroke="#111" stroke-width="1.500"/><path d="M2 1v2m3-2v2M1 3h5v3L4 8 1 6zM4 8v5" fill="none" stroke="#111"/><path d="M8 6h6v6H8z"/></svg>
        <svg width="20" height="18" viewBox="0 0 20 18"><path d="M1 16Q1 3 17 1M5 17Q5 7 17 5M9 17q0-6 8-8M13 17q0-3 4-4" fill="none" stroke="#333" stroke-width="1.500"/><circle cx="16" cy="16" r="1.500"/></svg>
        <svg width="20" height="16" viewBox="0 0 20 16"><path d="M1 5h3l4-4v14l-4-4H1zM12 5l6 6m0-6l-6 6" fill="none" stroke="#111" stroke-width="1.500"/></svg>
        <svg width="22" height="22" viewBox="0 0 22 22"><path d="M7 16L15 2q5-1 3 4l-9 12-3 2zM12 8q-3-3-6 1-8 8-4 9 4 0 8-6M14 12q5-2 6 0 0 4-5 4" fill="none" stroke="#111" stroke-width="1.500"/></svg>
        <svg width="30" height="18" viewBox="0 0 30 18"><rect x=".75" y=".75" width="28.500" height="16.500" fill="none" stroke="#111" stroke-width="1.500"/><path d="M4 5h22M4 9h22" stroke="#111" stroke-width="1.500" stroke-dasharray="2 2"/><path d="M7 13h16" stroke="#111" stroke-width="1.500"/></svg>
      </div>
      <div class="clock">2:11 PM<br>8/14/2021</div>
      <button type="button" class="notifications" aria-label="Notifications"><svg width="31" height="31" viewBox="0 0 31 31"><path d="M0 1h20v17h-7v4l-4-4H0z"/><path d="M4 5h12M4 9h12M4 13h9" stroke="#d2f0df" stroke-width="1.500"/><circle cx="20" cy="20" r="10" fill="#ccdcd3" stroke="#777"/><text x="20" y="25" font-size="15" class="thin">2</text></svg></button>
    </div>
  </footer>
</body>
</html>
```
FILE: styles.css
```css
* {
  box-sizing: border-box;
}

body {
  margin: 0;
  height: 100vh;
  display: flex;
  flex-direction: column;
  overflow: hidden;
  background-color: #fafafa;
  color: #333;
  font-family: "Noto Sans CJK SC", "Open Sans", sans-serif;
  font-size: 18px;
  line-height: 26px;
}

a {
  color: inherit;
  text-decoration: none;
}

button {
  display: flex;
  align-items: center;
  justify-content: center;
  padding: 0;
  border: none;
  background: none;
  color: inherit;
  font: inherit;
}

svg {
  display: block;
  flex: none;
}

svg text {
  font-family: "Open Sans", sans-serif;
  font-weight: bold;
  text-anchor: middle;
}

svg .white {
  fill: #fff;
}

svg .serif {
  font-family: "Liberation Serif", serif;
}

svg .thin {
  font-weight: normal;
}

.sprite {
  display: none;
}

/* browser */
.browser {
  font-family: "Open Sans", sans-serif;
  border-bottom: 2px solid #dadcdc;
}

.tab-strip {
  display: flex;
  height: 51px;
  background-color: #dee1e6;
}

.tabs {
  display: grid;
  grid-auto-flow: column;
  grid-auto-columns: 1fr;
  align-items: center;
}

.tabs-first {
  width: 128px;
  margin-left: 10px;
}

.tabs-middle {
  width: 41vw;
}

.tabs-last {
  width: 32.4vw;
}

.tab {
  display: flex;
  align-items: center;
  justify-content: center;
  min-width: 0;
  height: 30px;
  border-right: 1px solid #888b90;
}

/* squeezed tabs only show the middle of the favicon */
.tab svg {
  width: 20px;
  height: 20px;
  clip-path: inset(0 3px);
}

.tabs-first .tab:last-child {
  border-right: none;
}

.tab-active {
  position: relative;
  width: 49px;
  background-color: #fff;
  border-radius: 10px 10px 0 0;
}

.tab-active::before,
.tab-active::after {
  content: "";
  position: absolute;
  bottom: 0;
  width: 8px;
  height: 8px;
  background: radial-gradient(circle at 0 0, transparent 8px, #fff 8px);
}

.tab-active::before {
  left: -8px;
}

.tab-active::after {
  right: -8px;
  transform: scaleX(-1);
}

.new-tab {
  width: 54px;
}

.window-buttons {
  display: flex;
  align-items: flex-start;
  gap: 43px;
  margin-left: auto;
  padding: 11px 22px 0 0;
}

.tab-search {
  margin: 7px -4px 0 0;
}

.toolbar {
  display: flex;
  align-items: center;
  height: 60px;
  padding-right: 8px;
  background-color: #fff;
}

.toolbar-nav {
  display: flex;
  justify-content: space-between;
  width: 195px;
  padding: 0 34px 0 19px;
}

.address {
  flex: 1;
  display: flex;
  align-items: center;
  gap: 27px;
  height: 45px;
  min-width: 0;
  padding: 0 17px 0 22px;
  border-radius: 23px;
  background-color: #f1f3f4;
}

.url {
  flex: 1;
  overflow: hidden;
  white-space: nowrap;
  margin: 0 -22px 0 -9px;
  color: #5f6368;
  font-size: 18px;
}

.url span {
  color: #202124;
}

.extensions {
  display: flex;
  align-items: center;
  gap: 34px;
  padding: 0 23px 0 34px;
}

.update {
  width: 127px;
  height: 45px;
  gap: 25px;
  padding-left: 3px;
  border: 2px solid #c5221f;
  border-radius: 23px;
  background-color: #fcecea;
  color: #c5221f;
  font-size: 17px;
}

.update svg {
  fill: #d93025;
}

/* athenaNet bar */
.athena-nav {
  display: flex;
  align-items: center;
  gap: 25px;
  height: 40px;
  padding: 0 13px;
  background-color: #524a78;
  color: #e6e0f2;
  font-size: 15px;
  font-weight: bold;
}

.athena-logo {
  display: flex;
  align-items: center;
  gap: 2px;
  color: #fff;
  font-family: Lato, sans-serif;
  font-size: 22px;
  font-weight: 300;
}

.athena-logo b {
  font-weight: 900;
}

.patient-search {
  display: flex;
  align-items: center;
  height: 27px;
  margin-left: auto;
  background-color: #fff;
}

.patient-search input {
  width: 130px;
  padding: 0 6px 3px;
  border: none;
  color: #111;
  font-family: "Open Sans", sans-serif;
  font-size: 14px;
}

.patient-search button {
  width: 28px;
  height: 27px;
  border-left: 2px solid #524a78;
  background-color: #a992bb;
}

/* portal frame */
.frame {
  flex: 1;
  display: flex;
  flex-direction: column;
  min-height: 0;
  margin: 13px 13px 0;
  border: 2px solid #999;
  border-right-color: #eee;
  border-bottom-color: #e6e6e8;
  background-color: #fff;
}

.portal-header {
  display: flex;
  align-items: center;
  height: 80px;
  padding: 0 22px 4px 25px;
  border-bottom: 1px solid #d5d5d5;
  box-shadow: 0 2px 10px rgba(0, 0, 0, 0.1);
  z-index: 1;
}

.practice-logo {
  margin: 8px auto 0 0;
}

.practice-logo svg {
  width: 440px;
  height: 63px;
}

.practice-logo .logo-text {
  fill: #e8eefb;
  font-family: "Liberation Serif", serif;
  font-size: 15px;
  font-style: italic;
  font-weight: normal;
  text-anchor: start;
}

.header-link {
  display: flex;
  align-items: center;
  gap: 11px;
  color: #5c5c5c;
}

.header-link span,
.user-name {
  padding-bottom: 3px;
}

.messages-link {
  gap: 14px;
  margin: 0 70px 0 74px;
}

.user-menu {
  gap: 12px;
}

.avatar {
  width: 50px;
  height: 50px;
  border: 2px solid #d8d8d8;
  border-radius: 50%;
  color: #0067b9;
  line-height: 46px;
}

.portal-body {
  flex: 1;
  display: flex;
  min-height: 0;
}

.sidebar {
  display: flex;
  flex-direction: column;
  justify-content: space-between;
  width: 293px;
  padding: 39px 38px 27px;
  background-color: #efefef;
}

.sidebar nav {
  display: flex;
  flex-direction: column;
  align-items: flex-start;
  gap: 33px;
}

.side-link {
  display: flex;
  align-items: center;
  gap: 10px;
  height: 38px;
  padding-left: 1px;
  color: #888;
}

.side-link.active {
  margin-bottom: 2px;
  color: #333;
  font-weight: bold;
  border-bottom: 2px solid #333;
}

.collapse {
  width: 36px;
}

.content {
  flex: 1;
  overflow: hidden;
  padding: 24px 59px 0 66px;
}

h1 {
  margin: 0 0 30px;
  font-size: 20px;
  font-weight: 500;
  line-height: 26px;
}

.card {
  height: 900px;
  margin-left: 13px;
  padding: 24px 30px;
  border: 1px solid #d5d5d5;
  border-radius: 5px;
  box-shadow: 0 0 10px rgba(0, 0, 0, 0.18);
}

.card-title {
  display: flex;
  align-items: center;
  gap: 24px;
  height: 44px;
  padding-left: 2px;
  border-bottom: 1px solid #ccc;
}

h2 {
  margin: 0;
  padding-bottom: 2px;
  font-size: 23px;
  font-weight: 500;
  line-height: 32px;
}

.notice {
  display: flex;
  align-items: center;
  gap: 13px;
  margin: 34px 0 0 2px;
  font-size: 16px;
}

.message-form {
  margin: 37px 39px 0 19px;
}

.row {
  display: grid;
  grid-template-columns: 1fr 1fr;
  gap: 58px;
}

.field {
  margin-bottom: 28px;
}

.wide {
  margin-right: 58px;
}

label {
  display: block;
  padding-bottom: 2px;
  color: #666;
  font-size: 16px;
  line-height: 26px;
}

.select {
  display: grid;
  align-items: center;
  justify-items: end;
}

.select select,
.select svg {
  grid-area: 1 / 1;
}

.select svg {
  margin-right: 13px;
  pointer-events: none;
}

select,
textarea {
  display: block;
  width: 100%;
  border: 1px solid #aaa;
  border-radius: 4px;
  background-color: #fff;
  color: #333;
  font: inherit;
}

select {
  appearance: none;
  height: 40px;
  padding: 0 13px 2px;
}

.required select,
textarea {
  padding-left: 7px;
  border-left: 7px solid #0067b9;
}

.focused select {
  border: 2px solid #0067b9;
  border-left-width: 7px;
  box-shadow: 0 0 8px rgba(0, 0, 0, 0.25);
}

.disabled label {
  color: #aaa;
}

.disabled select {
  border-color: #e0e0e0;
  background-color: #e9e9e9;
  color: #aaa;
  opacity: 1;
}

.message {
  margin-bottom: 2px;
}

.message label {
  padding-bottom: 0;
  line-height: 25px;
}

textarea {
  height: 125px;
  padding-top: 6px;
  resize: none;
}

textarea::placeholder {
  color: #888;
}

.counter {
  margin: 0 5px 6px 0;
  text-align: right;
}

.attach-title,
.attach-text {
  margin: 0 0 7px;
}

.attach-title strong {
  font-weight: 500;
}

.attach-title em {
  margin-left: 8px;
}

ul {
  margin: 12px 0 0;
  padding-left: 20px;
}

li {
  margin-bottom: 7px;
}

.scrollbar {
  display: flex;
  flex-direction: column;
  align-items: center;
  width: 21px;
  padding: 8px 0;
  background-color: #f0f0f0;
}

.track {
  flex: 1;
  width: 17px;
  padding: 165px 0;
}

.thumb {
  height: 292px;
  background-color: #c1c1c1;
}

/* bottom bars */
.status-bar {
  display: flex;
  align-items: center;
  justify-content: flex-end;
  height: 30px;
  padding-right: 27px;
  background-color: #c5c4c9;
  font-size: 16px;
}

.status-item {
  display: flex;
  align-items: center;
  height: 24px;
  padding: 0 13px;
  border-left: 1px solid #888;
}

.status-item:last-child {
  padding: 0 0 0 25px;
}

.pill {
  height: 25px;
  margin-right: 4px;
  padding: 0 11px;
  border-radius: 5px;
  font-weight: normal;
  line-height: 25px;
}

.blue {
  background-color: #006e9e;
  color: #fff;
}

.orange {
  margin-right: 8px;
  padding: 0 10px;
  border: 1px solid #e9551f;
  background-color: #fff;
  color: #e9551f;
  line-height: 23px;
}

.alert-count {
  position: relative;
  padding: 0 1px;
  border-radius: 2px;
  background-color: #e9551f;
  color: #fff;
  line-height: 19px;
}

.alert-count::after {
  content: "";
  position: absolute;
  left: 5px;
  top: 19px;
  border-top: 5px solid #e9551f;
  border-right: 5px solid transparent;
}

.taskbar {
  display: flex;
  height: 50px;
  background: linear-gradient(90deg, #e2dfea, #dde2ee 14%, #d8e8ee 24%, #cdefee 38%, #cdefe6 60%, #d3f1df);
  color: #222;
  font-family: "Open Sans", sans-serif;
}

.system-buttons {
  display: grid;
  grid-template-columns: repeat(5, 1fr);
  width: 450px;
  margin-left: -10px;
}

.apps {
  display: flex;
  gap: 1px;
  margin-left: 14px;
}

.app {
  width: 61px;
  border-bottom: 3px solid transparent;
}

.open {
  width: 51px;
  margin: 0 5px;
  border-color: #0078d7;
}

.current {
  width: 61px;
  margin: 0;
  background-color: #ecf8f8;
}

.explorer {
  border-color: #ff7300;
  background-color: #f6b27e;
}

.tray {
  display: flex;
  align-items: center;
  margin-left: auto;
  padding-right: 19px;
}

.weather {
  gap: 11px;
  margin-right: 37px;
  font-size: 17px;
}

.tray-icons {
  display: flex;
  align-items: center;
  gap: 28px;
}

.clock {
  width: 104px;
  font-size: 14px;
  line-height: 22px;
  text-align: center;
}

.notifications {
  margin-left: 9px;
}
```
